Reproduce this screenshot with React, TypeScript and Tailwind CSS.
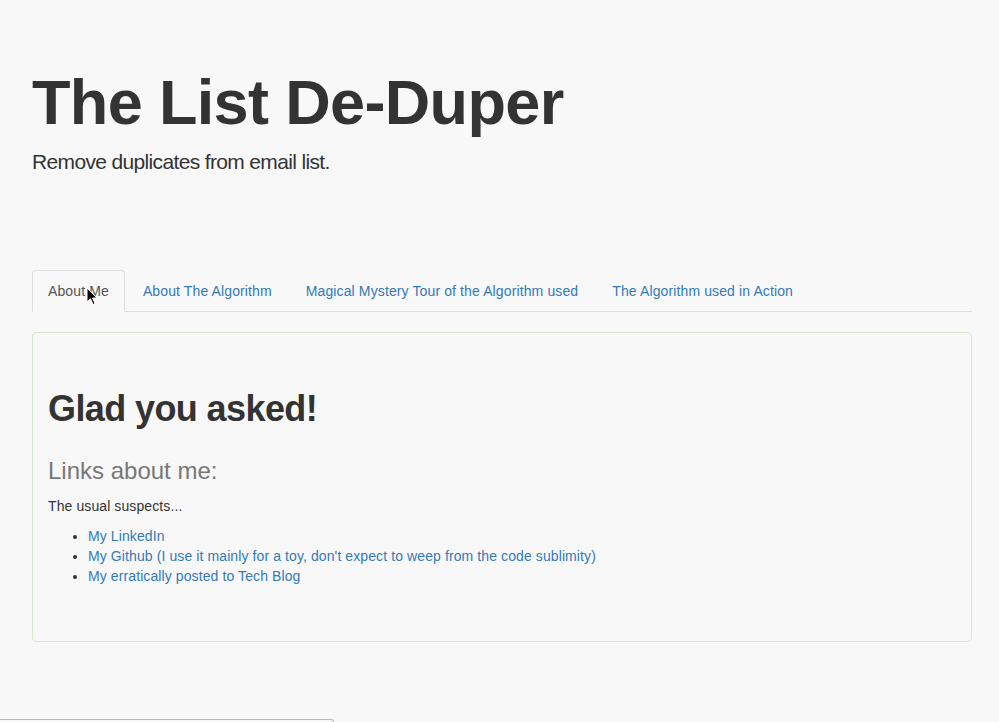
const tabs = [
    "About Me",
    "About The Algorithm",
    "Magical Mystery Tour of the Algorithm used",
    "The Algorithm used in Action",
];

const links = [
    "My LinkedIn",
    "My Github (I use it mainly for a toy, don't expect to weep from the code sublimity)",
    "My erratically posted to Tech Blog",
];

const Cursor = () => (
    <svg className="absolute left-[86px] top-[287px]" width="12" height="19" viewBox="0 0 12 19">
        <path d="M1 1 L1 15 L4.5 11.8 L7 17.5 L9 16.6 L6.6 11 L11 11 Z" fill="#000" stroke="#fff" strokeWidth="1" />
    </svg>
);

export default function App() {
    return (
        <div className="relative min-h-[722px] bg-[#f8f8f8] text-[#333] font-['Liberation_Sans',Arial,sans-serif] overflow-hidden">
            <div className="ml-[32px] w-[940px]">
                <div className="pt-[68px]">
                    <h1 className="text-[63px] leading-[1.1] font-bold tracking-[-0.65px]">The List De-Duper</h1>
                    <p className="mt-[10px] text-[21px] leading-[1.4] font-light tracking-[-0.65px]">Remove duplicates from email list.</p>
                </div>

                <ul className="mt-[93px] flex border-b border-[#ddd] text-[14px] leading-[20px] tracking-[0.12px]">
                    {tabs.map((t, i) => (
                        <li key={t} className="mr-[2px] -mb-px">
                            <a
                                className={`block px-[15px] py-[10px] border rounded-t-[4px] cursor-pointer ${i === 0
                                    ? "border-[#ddd] border-b-transparent bg-[#f8f8f8] text-[#555]"
                                    : "border-transparent text-[#337ab7]"
                                    }`}
                            >
                                {t}
                            </a>
                        </li>
                    ))}
                </ul>

                <div className="mt-[20px] border border-[#d6e9c6] rounded-[4px] px-[15px] pt-[56px] pb-[55px]">
                    <h1 className="text-[36px] leading-[40px] font-bold tracking-[-0.6px]">Glad you asked!</h1>
                    <h3 className="mt-[29px] text-[24px] leading-[26px] text-[#777]">Links about me:</h3>
                    <p className="mt-[12px] text-[14px] leading-[20px] tracking-[0.1px]">The usual suspects...</p>
                    <ul className="mt-[10px] pl-[40px] list-disc text-[14px] leading-[20px] tracking-[0.1px]">
                        {links.map((l) => (
                            <li key={l}>
                                <a className="text-[#337ab7] cursor-pointer">{l}</a>
                            </li>
                        ))}
                    </ul>
                </div>
            </div>

            <div className="mt-[77px] w-[334px] h-[20px] border-t border-r border-[#b8b8b8] rounded-tr-[3px]" />

            <Cursor />
        </div>
    );
}
